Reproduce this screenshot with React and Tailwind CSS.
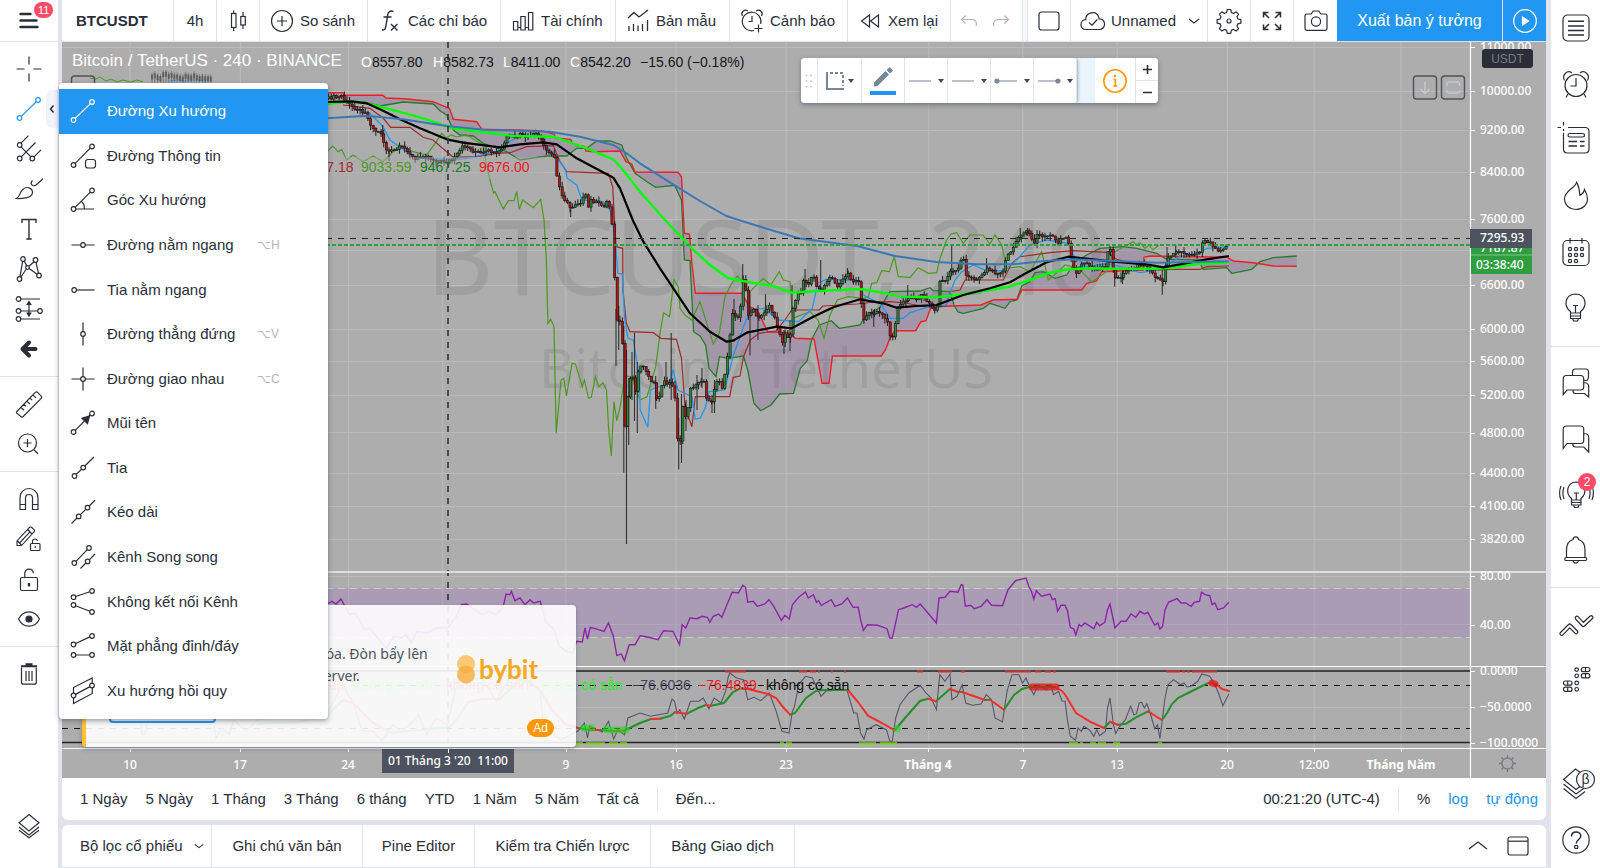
import React, { useState } from 'react';
import clsx from 'clsx';

const Icon = ({ size = 28, children, className }) => (
    <svg
        width={size}
        height={size}
        viewBox="0 0 28 28"
        fill="none"
        stroke="currentColor"
        strokeWidth="1.2"
        className={clsx('shrink-0', className)}
        aria-hidden="true"
    >
        {children}
    </svg>
);

const Dot = ({ x, y, r = 2.3 }) => <circle cx={x} cy={y} r={r} />;

const ICONS = {
    trend: <><Dot x={4.5} y={23} /><Dot x={23} y={5} /><path d="M6.2 21.4 21.3 6.7" /></>,
    info: <><Dot x={4.5} y={23} /><Dot x={23} y={4.5} /><path d="M6.2 21.4 21.3 6.2" /><rect x="16.5" y="17.5" width="10" height="8.5" rx="2.5" /></>,
    angle: <><Dot x={4.5} y={23} /><Dot x={23} y={4.5} /><path d="M6.2 21.4 21.3 6.2M6.8 23H25M12.5 15.5c2 1.6 3 4 2.9 7.3" /></>,
    horizontal: <><Dot x={14} y={14} /><path d="M2.5 14h9.2M16.3 14h9.2" /></>,
    horizontalRay: <><Dot x={5.2} y={14} /><path d="M7.5 14h18" /></>,
    vertical: <><Dot x={14} y={14} /><path d="M14 2.5v9.2M14 16.3v9.2" /></>,
    cross: <><Dot x={14} y={14} /><path d="M2.5 14h9.2M16.3 14h9.2M14 2.5v9.2M14 16.3v9.2" /></>,
    arrow: <><Dot x={4.5} y={23} /><Dot x={23} y={4.5} /><path d="M6.2 21.4 21.3 6.2" /><path d="M20.5 7 18.5 14.5 13 9.2z" fill="currentColor" /></>,
    ray: <><Dot x={5.5} y={22} /><Dot x={14.2} y={13.6} /><path d="M7.2 20.4l5.4-5.2M15.8 12 25 3" /></>,
    extended: <><Dot x={9.7} y={18.4} /><Dot x={18.5} y={9.6} /><path d="M2.5 25.5 8 20M11.4 16.7l5.4-5.4M20.2 8 26 2.3" /></>,
    parallel: <><Dot x={5.3} y={20} /><Dot x={20} y={5} /><Dot x={18.6} y={18.4} /><path d="M7 18.4 18.3 6.6M11.5 25.5l5.4-5.5M20.3 16.8 26 11" /></>,
    disjoint: <><Dot x={4.5} y={9.2} /><Dot x={23} y={3} /><Dot x={4.5} y={17} /><Dot x={23} y={24} /><path d="M6.7 8.5l14.1-4.7M6.6 17.8l14.2 5.4" /></>,
    flat: <><Dot x={4.5} y={12.5} /><Dot x={23} y={4} /><Dot x={4.5} y={23} /><Dot x={23} y={23} /><path d="M6.6 11.5l14.3-6.6M6.8 23h13.9" /></>,
    regression: <><Dot x={4.5} y={18.5} /><Dot x={23} y={8.5} /><path d="M6.5 17.4 21 9.6M4.5 16.2V10.5L23.2 1v5.2M4.5 20.8V26.5l18.8-10v-5.7" /></>,
    crosshair: <path d="M14 1.5v8M14 18.5v8M1.5 14h8M18.5 14h8" />,
    pitchfork: <><Dot x={4.7} y={10} /><Dot x={4.7} y={23.5} /><Dot x={17.3} y={23.5} /><path d="M6.3 21.8 20.5 7.5M6 8.2l7.5-7.5M19 21.8l7-7M6 11.8l10 10" /></>,
    brush: <path d="M1.5 23.5c2.8-1.5 3-4.3 4.4-6.6 2.2-3.6 5.8-5.4 8.9-3.8 3.4 1.8 3.8 5.8.4 8.2-3.5 2.5-8.700 2.400-13.700 2.200zM17.500 5.500c-1.300 1.200-1.600 3.200-.6 4.400 1.200 1.300 3.200 1 4.500-.2l6.600-6" />,
    text: <path d="M7 8V4.5h14V8M14 4.5V24M11.3 24h5.4" strokeWidth="1.4" />,
    pattern: <><Dot x={8} y={4} /><Dot x={20.5} y={5} /><Dot x={12.5} y={12.5} r={1.8} /><Dot x={4.5} y={24} /><Dot x={24} y={20.5} /><path d="M7.6 6.3 5 21.7M9.2 6l2.6 4.9M14 11.3l5-4.6M21 7.3l2.5 11M14.2 13.6l7.8 5.6M11.3 14l-5.4 8" /></>,
    forecast: <><Dot x={3.5} y={4} /><Dot x={3.5} y={16} /><Dot x={25} y={16} /><Dot x={3.5} y={24} /><path d="M5.8 4H25M5.8 16h16.9M5.8 24H25M14 7v13" /><path d="M14 6.500l1.800 3h-3.600zM14 21l1.800-3h-3.600z" fill="currentColor" /></>,
    back: <path d="M20.500 14h-12M14 7.500 7.500 14l6.500 6.500" strokeWidth="4" strokeLinejoin="round" strokeLinecap="round" />,
    ruler: <path d="M1.8 21.5 20.3 2.3c.7-.7 1.6-.7 2.3 0l3.6 3.8c.6.7.6 1.5 0 2.2L8.2 26.5c-.8.7-1.700.7-2.400 0l-4-3.300c-.4-.5-.4-1.200 0-1.700zM6 17.5l3 2.8M9 14.4l2 2M12 11.300l3 2.800M15 8.200l2 2M18 5.100l3 2.800" />,
    zoomIn: <><circle cx="12.5" cy="13" r="9" /><path d="M12.5 9v8M8.5 13h8M19 20l4 3.8" /></>,
    magnet: <path d="M5 24.5V12.500a9 9 0 0 1 18 0v12h-5.500V13a3.500 3.500 0 0 0-7 0v11.500zM5 19.500h5.500M17.500 19.500H23" />,
    pencilLock: <><path d="M2 20v-4L14.500 2.500c.7-.7 1.600-.7 2.300 0l2.200 2.200c.7.7.7 1.600 0 2.300L6.500 20.500H2zM2.500 16l4 4M12.700 4.500l4.300 4.500M5 17.500 15 6.800" strokeWidth="1.100" /><rect x="15.500" y="18.500" width="9.500" height="7" rx="1" /><path d="M17.500 18.500v-2c0-3.200 4.800-3.200 4.800-.5M20.200 21v2" strokeWidth="1.100" /></>,
    lock: <><rect x="5.5" y="12.5" width="17" height="13" rx="1.5" /><path d="M9.8 12.5V8.300c0-5.500 8.300-5.500 8.500 0" /><path d="M14 18v3.400" strokeWidth="2.4" /></>,
    eye: <><path d="M3.500 14C5.800 9.300 9.500 6.800 14 6.800S22.200 9.300 24.500 14c-2.300 4.700-6 7.200-10.500 7.200S5.800 18.700 3.500 14z" /><circle cx="14" cy="14" r="3" fill="currentColor" /></>,
    trash: <><path d="M6.500 7.500v14.700c0 1.200.8 2 2 2h10.800c1.200 0 2-.8 2-2V7.500M11 11v10M14 11v10M17 11v10" /><path d="M6 6.200h16M10.500 4.200h7" strokeWidth="2" /></>,
    layers: <path d="M14 2.500 24 10.800 14 19 4 10.800zM4 15l10 8 10-8M4 18.200l10 7.600 10-7.600" />,
    plusCircle: <><circle cx="14" cy="14" r="10.5" /><path d="M14 9v10M9 14h10" /></>,
    candles: <><rect x="6.5" y="6.5" width="4.500" height="14" /><rect x="15.800" y="9.500" width="4.500" height="8.500" /><path d="M8.700 3.500v3M8.700 20.500V24M18 5v4.500M18 18v4" /></>,
    fx: <><path d="M17.5 4.600c-3-1.500-5.200-.3-5.700 2.800l-2 12.200c-.5 3-1.700 3.800-4 3.200M7.500 10h8" strokeWidth="1.4" /><path d="M15 17l6.500 6.500M21.500 17 15 23.500" strokeWidth="1.4" /></>,
    bars: <path d="M4.500 14.500h4.300v8.500H4.500zM11.800 9.500h4.400V23h-4.400zM19.500 5.500h4.300V23h-4.300zM8.800 20.500h3M16.200 20.500h3.300" />,
    templates: <path d="M4 11l6-5.500 5 4.500 9-7M5 19v5M9.500 17v7M14 18.500v5.500M18.500 17v7M23.500 13v11" strokeWidth="1.3" />,
    alert: <><path d="M16 23.500a9.300 9.300 0 1 1 6.600-6.600M14 9v5.500h-3.500M4.500 9A3.700 3.700 0 0 1 9.800 4M18.200 4A3.700 3.700 0 0 1 23.500 9M20.500 17.500v8M16.500 21.500h8" /></>,
    replay: <path d="M13.500 8v12L5.500 14zM22.500 8v12l-8-6z" />,
    undo: <path d="M10.500 8.500 6.500 12.500l4 4M6.500 12.500H17a4.500 4.500 0 0 1 4 6.500" />,
    redo: <path d="M17.500 8.500l4 4-4 4M21.500 12.500H11a4.500 4.500 0 0 0-4 6.500" />,
    square: <rect x="4" y="5" width="20" height="18" rx="2.5" />,
    cloud: <path d="M7.500 22.500c-7.500 0-7-9.500-.8-9.800C6.600 5.500 17 2.600 19.600 9.800c.3.8.4 1.300.4 2 7-.5 7.700 10.700.2 10.700zM10 15.500l3 2.700 5.300-5.700" />,
    gear: <><path d="M12.300 3.500h3.400l.7 3 2.200.9 2.600-1.600 2.400 2.400-1.600 2.600.9 2.200 3 .7v3.400l-3 .7-.9 2.200 1.600 2.600-2.400 2.400-2.600-1.600-2.200.9-.7 3h-3.400l-.7-3-2.200-.9-2.600 1.600-2.400-2.400 1.600-2.600-.9-2.200-3-.7v-3.400l3-.7.9-2.200-1.600-2.600 2.400-2.400 2.600 1.600 2.200-.9z" strokeLinejoin="round" transform="translate(0 -1)" /><circle cx="14" cy="14" r="2" /></>,
    fullscreen: <path d="M10.500 5.500h-5v5M5.500 5.500l5.500 5.500M17.500 5.500h5v5M22.500 5.500 17 11M10.500 22.500h-5v-5M5.500 22.500 11 17M17.500 22.500h5v-5M22.500 22.500 17 17" strokeWidth="1.500" />,
    camera: <><path d="M4.800 7h4.400l2-3h5.600l2 3h4.400c.9 0 1.800.8 1.800 1.800v12.700c0 1-.9 1.800-1.800 1.800H4.800c-.9 0-1.800-.8-1.800-1.800V8.800C3 7.800 3.900 7 4.800 7z" /><circle cx="14" cy="14.500" r="4.600" /></>,
    play: <><circle cx="14" cy="14" r="11.3" /><path d="M11.500 10v8l6-4z" fill="currentColor" /></>,
    chevronDown: <path d="M9 12l5 4 5-4" />,
    chevronUp: <path d="M5 17l9-7 9 7" />,
    windowIcon: <><rect x="4" y="5" width="20" height="18" rx="2" /><path d="M4 9.2h20" /></>,
};

const RIGHT_ICONS = {
    news: <><rect x="1" y="1" width="26" height="26" rx="4.5" /><path d="M6 7.200h16M6 12h16M6 16.500h16M6 21h16" strokeWidth="1.4" /></>,
    alarm: <><circle cx="14" cy="15.5" r="11" /><path d="M14 8v8H8.500M2.500 10.500C-.5 4.500 5.500-.5 10 3M25.500 10.500c3-6-3-11-7.500-7.500M6 24l-2 3.500M22 24l2 3.500" /></>,
    dataWindow: <><path d="M6 1.500h17c2.500 0 4 1.500 4 4V23c0 2.500-1.500 4-4 4H5.500c-2.500 0-4-1.500-4-4V7M1.500-4v3.500M1.500 3v2M-4.500 1.500H-1" /><rect x="6" y="7.500" width="16.500" height="3.500" rx="1.700" /><path d="M6.500 15.500H15M18 15.500h4.500M6.500 20H15M18 20h4.500" strokeWidth="1.4" /></>,
    fire: <path d="M14.500.5c-.5 5-12.500 8.500-12 16.500.3 6.500 5.500 10.500 11.500 10.500s11.500-4.500 11.500-10.500c0-3.500-1.300-6.500-3-9.500-.8 3.500-2.300 4.800-4.700 5.800C17.500 8.500 17 3.500 14.500.5z" />,
    calendar: <><rect x="1" y="2.5" width="26" height="25" rx="4.5" /><path d="M8 0v5.500M20 0v5.500" /><Dot x={8} y={11} r={1.6} /><Dot x={14} y={11} r={1.6} /><Dot x={20} y={11} r={1.6} /><Dot x={8} y={17} r={1.6} /><Dot x={14} y={17} r={1.6} /><Dot x={20} y={17} r={1.6} /><Dot x={8} y={23} r={1.6} /><Dot x={14} y={23} r={1.6} /></>,
    bulb: <path d="M8.500 19v-1.500C1 12 3 .5 13.500 0 24 .5 26 12 18.500 17.500V19zM8.500 19h10v5.500h-10zM8.500 22h10M10.500 24.500l1 2.500h4l1-2.500M11 11.500h5M13.500 11.500V19" />,
    chats: <path d="M10.500 6.500V3c0-2 1-3 3-3h10c2 0 3 1 3 3v5c0 1.500-.5 2.500-1.500 3.500H22M4.500 6.500h14c2 0 3.200 1.200 3.200 3V18c0 1.800-1.200 3-3.200 3H5l-3.800 4.500V10c0-2.200 1.300-3.500 3.300-3.500zM22 13.500c3 .3 4.700 1.200 4.700 4V28l-4.200-3.500H13c-1.500 0-2-.5-2-3" />,
    chat: <path d="M4.500 1h14c2 0 3.200 1.200 3.200 3v11.500c0 1.800-1.200 3-3.200 3H5l-3.800 5V4.500C1.200 2.300 2.500 1 4.500 1zM22 8.500c3 0 4.700 1 4.700 4V27l-5-5h-8c-2 0-3-1-3-3" />,
    idea: <><path d="M9.500 19v-1.500C3 12 5 1.500 14 1c9.500.5 11.500 11 5 16.500V19zM9.500 19H19v5H9.500zM9.500 21.500H19M11.500 24l1 2.500h3.500l1-2.500M12 12h5M14.300 12v7" /><path d="M-1 5c-2 5-2 9 0 14M2 6c-1.500 4-1.500 8 0 12M27 6c1.500 4 1.500 8 0 12M30 5c2 5 2 9 0 14" /></>,
    bell: <path d="M4.500 20.500V13c0-6 3-9.500 6.500-10.500.5-3.500 5-3.500 5.500 0 3.500 1 6.500 4.500 6.500 10.500v7.500M4 20.500h19.500c1.600 0 1.600 3 0 3H4c-1.600 0-1.600-3 0-3zM11 23.500c.5 3.500 5 3.500 5.500 0" />,
    zigzag: <path d="M-1.500 22.500 6.500 14.500c.8-.8 1.600-.8 2.400 0l6.500 6.500c1.500 1.600-.8 3.800-2.300 2.300l-5.400-5.400-6.800 7c-1.500 1.500-4-.8-2.400-2.400zM30.500 8.500 22.500 16c-.8.8-1.600.8-2.400 0l-6.500-7c-1.400-1.600 1-3.800 2.400-2.300l5.400 5.600 6.500-6c1.700-1.500 4 .7 2.600 2.200z" />,
    dots: <><rect x="1.5" y="15" width="8.5" height="4.200" rx="2" /><path d="M5.700 15v4.200M5.700 21.200v4.200M23.500 1.500v4.200M23.500 7.700v4.200" /><rect x="1.5" y="21.200" width="8.500" height="4.200" rx="2" /><rect x="19.300" y="1.500" width="8.500" height="4.200" rx="2" /><rect x="19.300" y="7.700" width="8.500" height="4.200" rx="2" /><Dot x={14.7} y={3.6} r={1.8} /><Dot x={14.7} y={9.8} r={1.8} /><Dot x={14.7} y={17} r={1.8} /><Dot x={14.7} y={23.300} r={1.8} /></>,
    help: <><circle cx="14" cy="14" r="13.2" /><path d="M9.500 10.500c0-6 9.300-5.800 9.300-.5 0 3.500-4.600 3.500-4.600 7.500" strokeWidth="1.5" /><circle cx="14.200" cy="21" r="1.7" /></>,
};

const BetaLayers = () => (
    <Icon className="overflow-visible">
        <path d="M19 3 13.500-1 1.500 9.500 14 19.500l4-3M1.500 14 14 24l9-6.500M1.500 18.500 14 28.500l9-7" />
        <circle cx="23.5" cy="9.5" r="9" fill="#fff" />
        <text x="23.5" y="14" textAnchor="middle" fontSize="14" fill="currentColor" stroke="none" fontFamily="Liberation Sans, sans-serif">β</text>
    </Icon>
);

const TOOL_GROUPS = [
    [['crosshair', 'Con trỏ'], ['trend', 'Đường Xu hướng'], ['pitchfork', 'Gann và Fibonacci'], ['brush', 'Bút vẽ'], ['text', 'Văn bản'], ['pattern', 'Mẫu hình'], ['forecast', 'Dự báo'], ['back', 'Biểu tượng']],
    [['ruler', 'Thước đo'], ['zoomIn', 'Phóng to']],
    [['magnet', 'Nam châm'], ['pencilLock', 'Giữ chế độ vẽ'], ['lock', 'Khóa bản vẽ'], ['eye', 'Ẩn bản vẽ']],
];

const LINE_TOOLS = [
    { icon: 'trend', label: 'Đường Xu hướng' },
    { icon: 'info', label: 'Đường Thông tin' },
    { icon: 'angle', label: 'Góc Xu hướng' },
    { icon: 'horizontal', label: 'Đường nằm ngang', shortcut: '⌥H' },
    { icon: 'horizontalRay', label: 'Tia nằm ngang' },
    { icon: 'vertical', label: 'Đường thẳng đứng', shortcut: '⌥V' },
    { icon: 'cross', label: 'Đường giao nhau', shortcut: '⌥C' },
    { icon: 'arrow', label: 'Mũi tên' },
    { icon: 'ray', label: 'Tia' },
    { icon: 'extended', label: 'Kéo dài' },
    { icon: 'parallel', label: 'Kênh Song song' },
    { icon: 'disjoint', label: 'Không kết nối Kênh' },
    { icon: 'flat', label: 'Mặt phẳng đỉnh/đáy' },
    { icon: 'regression', label: 'Xu hướng hồi quy' },
];

const RANGES = ['1 Ngày', '5 Ngày', '1 Tháng', '3 Tháng', '6 tháng', 'YTD', '1 Năm', '5 Năm', 'Tất cả'];

const GRID_X = [130, 240.4, 348.5, 442.5, 565.8, 676, 786.2, 928.8, 1022.8, 1117.2, 1227.4, 1314.2, 1401];
const GRID_Y = [47.5, 91.5, 130.5, 172.5, 219.5, 250.5, 285.5, 329.5, 361.5, 395.5, 432.5, 473.5, 506.5, 539.5, 576.5, 624.5, 707.5];

const PRICE_LABELS = [
    [47, '11000.00'], [91, '10000.00'], [130, '9200.00'], [172, '8400.00'], [219, '7600.00'], [285, '6600.00'],
    [329, '6000.00'], [361, '5600.00'], [395, '5200.00'], [433, '4800.00'], [473, '4400.00'], [506, '4100.00'],
    [539, '3820.00'], [576, '80.00'], [625, '40.00'], [671, '0.0000'], [707, '−50.0000'], [743, '−100.0000'],
];

const TIME_LABELS = [
    [130, '10'], [240, '17'], [348, '24'], [566, '9'], [676, '16'], [786, '23'], [928, 'Tháng 4', true],
    [1023, '7'], [1117, '13'], [1227, '20'], [1314, '12:00'], [1401, 'Tháng Năm', true],
];

const EMA_SLOW = '62,128 200,123 327,118.3 363,116 376.7,116.7 403,119.3 446.7,126 486.7,130 520,130.7 550,131.7 580,136.7 613.3,145 626.7,153.3 640,163.3 674.6,185.3 700,201 726.3,216 745,222 771,230 798.6,238.3 857,246 895,256 936.4,262 977.7,264.3 1012,264.3 1045,261 1073.3,259.3 1106.7,260.7 1156.7,262.7 1229,261.3';
const EMA_MID = '327,104 350,101.3 363,102.7 380,106.7 420,117.3 453.3,128.3 486.7,132.7 513.3,136 553.3,136.7 586.7,148.3 613.3,159.3 621.7,168.3 640,191.7 665,220 691.7,248.3 710,265 728.3,278.3 750,282.3 773.3,286 791.7,292.7 813.3,291.3 860,289 883.3,292.7 900,296.7 936.7,297.3 960,294.7 1006.7,287.3 1030,280 1050,272.7 1068.3,269.3 1090,268.3 1113.3,268.7 1153.3,268.7 1173.3,267.7 1196.7,264 1229,262.3';
const EMA_FAST = '327,102 351.7,101.3 366.7,103.3 380,109.3 400,119.3 420,128.3 446.7,139.3 463.3,142.7 500,147.3 520,144.3 543.3,142.3 556.7,144.3 576.7,158.3 613.3,177.7 620,188.3 632.7,220 643.3,241.7 660,268.3 673.3,288.3 690,313.3 710,331.7 726.7,341.7 733,340.7 746.7,332.7 776.7,326.7 791.7,328.3 813.3,316.7 833.3,307.3 860,299.3 883.3,303.3 896.7,307.7 916.7,306 936.7,305 963.3,295 990,288.3 1010,282.3 1026.7,272.7 1046.7,262.3 1068.3,256.7 1083.3,258.3 1113.3,261.7 1146.7,264.3 1163.3,267.3 1180,264.3 1206.7,259.3 1229,256';
const SPAN_B = '327,92.7 343,92.7 344,95.3 382.7,95.3 386,98 407.3,99 433,101.7 446.7,107.3 449.3,108.3 453.3,119.3 476.7,121.7 482,129.3 516.7,130 542.7,131 554,134 556,138.3 570.7,139.3 572,143 578,146 584,146.5 586,151 595,151.7 620,151 626,161.7 631.7,164 635,172 678,172.3 681.5,176.7 684.3,233.3 689.5,234 691.9,263.3 695.3,293.3 741.8,293.3 749.4,306.7 757.3,310 767.6,331.7 790,332.7 795.2,338.3 814.1,339 817.6,358.3 822,383.3 829,383.3 832.4,356 881.3,356 885.4,350 889.9,338.3 895,330.7 915.7,330.7 920.9,321.7 926,320.7 931.2,306.7 981,305 993.2,300 1017.3,299.3 1021.8,290 1081.7,290 1086.7,283.3 1096.7,281 1101.7,271.7 1143.3,270 1144,257.3 1150,256 1198.3,256.7 1227.3,257.3 1233.3,261 1253.3,262.7 1273.3,266 1296.7,266.3';
const SPAN_A = '327,103 350,102 363.3,101.7 380,106 403.3,102 433.3,104 440,110.7 446.7,115 453.3,130 460,135 473.3,136 483.3,143.3 506.7,151.7 520,160 546.7,156 566.7,156 576.7,148.3 586.7,148.3 596.7,141 610,141 621.7,145 626.7,158.3 635,173.3 647,181.7 655.7,187.3 674.6,185.3 681.5,200 684.3,260 690,260.7 692,300 693.6,331.7 700,336 705.6,345 709,368.3 716,376.7 719.4,356.7 728,358.3 743.5,356 747.7,370 753.9,403.3 760.7,410.7 771,405 779.7,394 793.5,393.3 800.3,368.3 807.2,360.7 811.7,339.3 819.3,325 831.3,320.7 839.3,328.3 860,325 865,316.7 880,307.3 890,291.7 920,291 930,287.7 933.3,290.7 950,291.7 954,305 958,312 963.3,313.3 983.3,308.3 990,303.3 1005,308.3 1010,301.7 1016.7,300 1021.7,286 1030,281.7 1035,272.7 1043.3,271.7 1055,278.3 1066.7,275 1075,262 1086.7,255 1100,248.3 1123.3,246.7 1136.7,248.3 1156.7,253.3 1166.7,259.3 1198,260 1203.3,269.3 1226.7,267.7 1231.7,273.3 1251.7,269.3 1260,261.7 1273.3,257.7 1296.7,256';
const KIJUN = '343,105 370,108.3 383.3,118.3 390.7,127.3 410,127.3 423.3,137.3 433,140 446.7,151.7 453.3,157.3 476.7,156.7 496.7,153.3 510,152.7 526.7,146.7 553.3,145.7 560,161.7 566.7,171.7 608.3,173.3 612.7,186.7 616,246.7 622.7,248.3 622.9,290 626.4,323.3 629.9,331.7 653.3,332.7 660.9,338.3 676.4,339.3 681.5,358.3 685,406.7 691.9,426.7 695.3,396.7 729.7,396.7 733.2,377.3 740,376 743.5,356.7 750.4,340 759,333.3 776,331 785,320 791.7,310 819.3,310 822.7,306 857,304 875,302 890,301.7 905,303 933,308 946,306 950,291.7 960,290 965,280 1003.3,280 1011.7,263.3 1020,256.7 1050,252.7 1073.3,250.7 1106.7,252.3 1116.7,259.3 1140,265 1146.7,270.7 1170,269.3 1200,269.3 1206.7,266.7 1229,266';
const TENKAN = '353,106.7 370,113.3 383,126.7 390,140 406.7,151.7 420,158 453,160 466.7,158.3 496.7,151.7 506.7,143.3 520,136 540,136 550,150 565,168.3 567.3,178.3 576.7,185 581.7,200 603.3,201.7 610,210 615,236.7 617.8,273.3 622.3,274 624.7,320 628,338.3 633.3,340 639.5,376.7 640.2,410 647.8,427.3 650.5,390 659,386.7 669.5,383.3 673,370 678,390 691.9,396.7 695.3,419.3 700.5,418 705.6,406.7 709,391.7 724.6,390 733,356.7 743.5,326.7 750.4,310 764,308.3 778,320 798.6,321.7 812.4,308.3 817.6,283 826.7,279.3 860,280.7 863.3,295 880,303.3 890,318.3 903.3,318.3 910,312.7 926.7,307.3 946,305 950,293.3 955,280 961.7,271.7 973.3,265 985,270 1003.3,271 1016.7,260 1030,245 1046.7,240 1068.3,243.3 1073.3,255 1086.7,266.7 1106.7,263.3 1120,266.7 1140,272.7 1156.7,270 1170,263.3 1180,256.7 1200,252.7 1206.7,248.3 1228.7,246.7';
const CHIKOU = '327,151.7 332.7,146 338.3,151.7 341.7,149.3 346.7,160 353,155 363,161.7 373,156 383,161.7 400,145 413,151.7 426.7,155 435,143.3 441.7,133.3 446,138 451,135 456.7,137 466.7,135 483.3,145 486.7,166.7 491.7,186.7 493.5,193 495,191.7 503.3,209 508.3,200.7 514,200.7 516.7,191.7 519.3,209.3 522.7,200 533.3,207.7 540.7,199.3 544,220 546.3,258 547.9,323.3 550.7,319.3 554,326.7 556.2,433.3 561,380 563.8,378.3 566.5,396 572,363.3 575.5,364 582.3,386.7 584.4,380 588.5,398.3 591.3,397.3 595.4,376.7 598.9,386.7 603,382.7 606.5,390 608.5,426.7 611.3,456 614,401.7 616.8,420.7 620.2,406.7 624.7,375 632,378 640,400 647,396.7 655.7,366.7 660,333.3 663.6,312.7 669.5,316.7 674,280 678.3,286.7 680,308.3 685,315 691.7,320 700,301.7 713.3,344 719.3,333.3 725,296.7 731.7,283.3 737.3,276 743.3,283.3 750,291.7 763.3,278.3 770.7,285 779.3,271.7 783.3,280 790,281.7 792.7,318.3 810,311.7 818,320 824,338.3 830,315 837.3,300 848.3,296.7 863.3,298.3 868.3,296.7 871.7,283.3 876.7,282.7 881.7,270.7 889.3,271.7 894.3,256.7 898.3,276.7 910,277.3 918.3,267.7 928.3,273.3 936.7,272.7 940,258.3 946.7,240 951,234 956.7,232.7 963.3,243.3 970,235 983,235 990,244 995,235 1001.7,245 1006.7,268.3 1020,266.7 1030,271.7 1041.7,251.7 1048.3,280 1060,270 1065,265 1078,268 1091.7,281.7 1106.7,271.7 1113,253 1120,249 1133.3,241.7 1136,245 1140,242.7 1145,248.3 1149,245 1153,250 1159,245';

const CLOSES = [
    [327, 99], [333, 97], [338, 98], [342.7, 95], [345, 101.7], [353, 106.7], [360, 110.7], [365.7, 111.7], [368.3, 120], [374, 130], [381.7, 133.3],
    [385, 148.3], [389.3, 151.7], [396, 150], [401, 146.7], [407.3, 150], [411.7, 156], [415, 160], [420, 156.7], [426.7, 155], [433, 160], [443.3, 161.7],
    [453, 160], [458.3, 153.3], [462.7, 146.7], [466.7, 145.7], [471.7, 150.7], [476.7, 151.7], [481.7, 154], [490, 150.7], [496, 155], [500, 151.7],
    [504, 145], [506.7, 136.7], [511.7, 135], [516.7, 139.3], [520, 135], [526.7, 137.3], [533, 134.3], [540, 135.3], [542.7, 145], [548.3, 154], [554, 155],
    [555.7, 171.7], [560.7, 191.7], [566, 201.7], [570.7, 208.3], [575, 204], [581.7, 201.7], [585.3, 193.3], [587.7, 209.3], [590.7, 200], [596.7, 202.7],
    [603.3, 206.7], [608.3, 200], [610.7, 215], [613.3, 231.7], [616, 322.7], [619, 319], [622, 326], [624.7, 432.7], [627.6, 398], [630, 379], [633, 378],
    [635, 394.7], [637, 378.5], [640, 363.3], [644.7, 368.5], [649, 375], [650.5, 385], [653.3, 379.3], [655.7, 398.3], [660, 396.7], [663.6, 377.3],
    [667, 385], [671, 381.7], [674.6, 390], [676.9, 434.3], [679.5, 456], [682.1, 400.7], [685, 419.3], [687.7, 410.7], [690, 386.7], [694.6, 389.3],
    [697, 381.7], [704, 380], [706.5, 400], [712.5, 400.7], [715, 383.3], [718.7, 379.3], [722, 387.7], [724.6, 377.3], [727.3, 359.3], [729.7, 338.3],
    [732, 313.3], [738.4, 316], [740.8, 305], [742.8, 280], [745.3, 283.3], [747.5, 315], [753.3, 310], [758.3, 320], [763.3, 313.3], [769.3, 305],
    [773.3, 315], [780, 333.3], [783.3, 344], [785.3, 333.3], [790, 340.7], [792.3, 311.7], [796.7, 295], [801.7, 290.7], [804.3, 276.7], [807.3, 285],
    [813.3, 276.7], [817.3, 286.7], [822.7, 290.7], [826.7, 281.7], [831.7, 276.7], [836, 286.7], [841.7, 281.7], [847.3, 272.7], [851.7, 281.7],
    [859.3, 281.7], [861, 301.7], [863.3, 319.3], [868.3, 313.3], [876.7, 311.7], [881.7, 315], [887.3, 319.3], [889.3, 335], [893.3, 338.3],
    [896.7, 311.7], [900, 303.3], [906.7, 300], [911.7, 296.7], [916.7, 300], [922.7, 295], [926.7, 300], [933.3, 308.3], [936.7, 313.3], [939.3, 281.7],
    [946.7, 280], [950.7, 271], [957.3, 271], [960.7, 260], [963.3, 257.3], [966, 276.7], [971.7, 278.3], [978.3, 278.3], [983.3, 273.3], [986.7, 268.3],
    [991.7, 271.7], [1003.3, 271.7], [1006.7, 256.7], [1010.7, 251.7], [1014, 248.3], [1017.3, 237.3], [1021.7, 233.3], [1027.3, 232.3], [1030.7, 236],
    [1034, 244], [1037.3, 234], [1043.3, 237.3], [1050, 235], [1055, 237.3], [1057.3, 245], [1060, 239.3], [1067.3, 238.3], [1070, 250], [1071.7, 263.3],
    [1076, 273.3], [1080, 265], [1086.7, 263.3], [1093.3, 268.3], [1100, 268.3], [1105, 266.7], [1108.3, 251.7], [1110.7, 250], [1112.7, 263.3],
    [1114.7, 279.3], [1118.3, 278.3], [1123.3, 274], [1128.3, 268.3], [1133.3, 270], [1140, 263.3], [1146.7, 266.7], [1153.3, 273.3], [1158.3, 280],
    [1162.7, 282.7], [1165, 266.7], [1168.3, 256.7], [1173.3, 252.7], [1180, 251.7], [1190, 254.3], [1200, 251.7], [1201.7, 241.7], [1206.7, 240.7],
    [1211.7, 243.3], [1216.7, 250], [1223.3, 248.3], [1229, 245.7],
];

// x, top, bottom of the wicks that are too long for the generated range
const LONG_WICKS = [
    [382.7, 125, 140], [389, 150, 161], [570.7, 207, 217], [616, 309, 366], [618.7, 306, 350], [623.8, 326, 472.7], [626.5, 350, 544], [628.7, 378, 445],
    [632, 352, 400], [634.5, 332.7, 421], [637.3, 362, 433], [655.7, 376, 408.7], [671.2, 333, 400], [666, 362, 385], [678.7, 418, 469.3], [681.5, 394, 463],
    [686, 400, 431], [697, 375, 410], [702, 368, 388], [712, 395, 413], [714.5, 380, 413], [742.7, 264, 305], [750, 292, 355.6], [758, 305, 340],
    [734, 299, 318], [765.5, 294, 312], [784, 330, 354], [790, 320, 351], [792, 285, 312], [805, 269, 290], [820.7, 260, 290], [847.5, 268, 276],
    [873.7, 310, 327], [907.7, 285, 303], [951.7, 245.3, 275], [986.5, 258, 272], [1020.3, 228, 240], [1027.5, 228, 236], [1110, 246, 255],
    [1114.7, 270, 286.7], [1122.5, 268, 284], [1162.3, 266, 294.7], [1167, 247, 270], [1175.7, 245, 258], [1205, 238, 246],
];

const RSI = '327,604 332,601.3 336,604 341,599 344.4,605.3 349.6,614.7 355,613 365,629.7 370,628 379,639.7 386,648 394,636.3 401,638 406,634.7 411.5,643 416.7,631.3 427,633 435.6,628 447.7,628 456.3,616.3 461.5,604.7 466.6,604 475,609.7 482,614.7 489,611.3 496,614.7 503,608 506,594 509.7,594.7 511.4,591.3 514.9,600.7 520,598 525,604.7 530,599.7 533.4,603 540.3,601.3 545.5,621.3 554,629.7 559.3,646.3 566,651.3 573,653 576.5,641.3 582.3,642 585,628 587.5,639 590.3,627.3 595.4,628.7 604,631.3 608.5,623 613.3,636.3 616.8,655.3 621.3,654 624.4,660.7 629.2,644.7 635,644.7 640.2,635.7 648.8,637.3 658,639.7 663.6,630.7 673,631.3 679.5,644.7 682.2,624.7 685.7,628 690,618 697,618.7 702,616.3 707.4,617.3 709.8,622.3 713.2,616.3 718.7,614 721.8,617.3 726.3,606.3 732.2,592.3 738.4,593 742.8,585.3 745.6,587.3 747.7,602.3 753.2,601.3 757.3,606.3 764.9,604 769,599.7 773.8,606.3 781.4,620.3 784.9,615.3 789.3,619 792.4,604.7 798.6,597.3 805.5,592 808.3,598 813.4,594.7 816.5,602.3 818.6,600.7 821.3,605.3 831.3,599.7 834.8,606.3 841.7,604 847.5,598 853,607.3 858.2,607.3 860.6,619.7 863.4,630.3 867.5,624.7 877.8,625.3 887,628.7 889.9,638 892.3,638 898.5,609.7 903.7,608 912.3,604.7 916.4,607.3 920.2,604 936.4,623 939,598 945,597.3 950,591.3 958,592.3 961.2,584.7 962.9,585.3 965.3,606.3 970.8,605.3 974.3,608.7 981,606.3 987,599.7 991.5,605.3 1002.5,605.7 1008,589.7 1015.6,580.7 1026,578 1028.7,586.3 1031.4,591.3 1033.8,599 1036.3,590.7 1041.4,596.3 1050,594 1052.4,599.7 1055.2,598.7 1057.6,611.3 1061,605.3 1065,605.3 1067.6,611.3 1070.3,627.3 1073.8,629 1075.8,634.7 1079,624.7 1081.4,626.3 1084.8,623 1093.8,628.7 1096.8,622.3 1099.6,625.7 1104.8,622.3 1107.5,609.7 1110,604 1115,628 1121,621.3 1126,621.3 1131,614 1135.8,617.3 1140,611.3 1144.4,614 1147.8,612.3 1154.7,625.3 1157.8,623 1159.9,629 1162.6,626.3 1165,609.7 1168.5,602.3 1177,598.7 1181.2,603 1185.7,603 1191.2,606.3 1194.3,602.3 1199.5,601.3 1201.5,592.3 1205.3,594.7 1209.8,595.7 1212.2,604.7 1215,603 1217.7,609.7 1223.6,608 1228.8,602.3';
const WILLIAMS = '139.5,714.7 142,734 145,733 148,719.7 175,700 213.5,719.7 216,738 222,728 229,734.7 234,719.7 246,731 258,719.7 280,718 327,714.7 342.7,683 348,694.7 353,701 361.6,731 372,731 382,741 392.6,724.7 401,731 410,724.7 418.4,714.7 427,734.7 435.6,718 447.7,724.7 451,708 458,681 482,678 496,701 509.7,678 527,681 540,691 543.8,728 561,739.7 578,731 584.4,723 587.5,738 589.6,726.3 602.3,732 608.5,721.3 613.7,739 617.8,729.7 624.4,734.7 628,718 640,713 650.5,716.3 667.8,713 672,699 674.6,701.3 677,713 679.8,709.7 684.3,719 690.5,701.3 698.8,701.3 703.2,698 709,708.7 714.2,698 721,703 725.6,691.3 728,678 729.7,673 736.6,678 743.5,679.7 747.7,699.7 753.9,697.3 760.7,700.7 769.3,693 776.2,711.3 782,731.3 789,733 792.4,711.3 794.5,706.3 798.6,684.7 805.5,676.3 812.4,678 821,696.3 826,691 846.8,689.7 850.3,701.3 853.7,713 857,713 860.6,733 864,739 866.8,729.7 876,724.7 886.4,729.7 889.9,741.3 892.3,741.3 895.7,718 900,704.7 908.8,693 920.2,685.3 926,693 931.2,698 936.4,709.7 939.8,674.7 945,681.3 950,674 951.9,699.7 957,696.3 962.2,684.7 965.7,703 972.5,705.3 981,704 986.3,694.7 991.5,699.7 995,718 1002.5,722 1007,691.3 1012,674.7 1019,674.7 1022.5,683 1026,678 1029.4,686.3 1033.8,694.7 1038,684.7 1046.6,689.7 1050.7,684.7 1053.5,694.7 1058.6,691.3 1062,701 1065,701.3 1067.6,721.3 1070.3,736.3 1075.5,740.3 1078,728 1081.4,731.3 1084,726.3 1089.3,729.7 1093.8,736.3 1096.8,729.7 1099.6,735.7 1105.5,731.3 1107.5,708 1110,698 1113.4,724.7 1115.8,733.7 1118.5,728 1125.4,719.7 1130.6,706.3 1134,714.7 1136.5,713.7 1139.2,703 1141.6,702.3 1144.4,708 1146.8,703.7 1150.2,713 1154.7,728.7 1157.5,724.7 1159.9,738.7 1162.6,718 1165,698 1167.8,684.7 1173.6,679.7 1180.5,684.7 1184,683 1187,687 1190.9,686.3 1197.8,681.3 1201.9,674 1209.8,676.3 1215,684.7 1218.4,693 1222.9,705.7 1228.8,694';

const MA_UP = [
    '258,724 300,722 327,716 342.7,700', '390,733 420,730 450,727 458,718 468,702', '500,699 520,680 530,681', '578,728 590,730', '600,730 612,731', '624.4,730.5 640,723 651,719', '660,718.7 670,716 675,712.3', '687,713.7 698,708 706,705',
    '711,705.7 724,703 733,692 740,688.7 745,688', '790,714.7 795,713 806,698 816,691 822,690 848,690', '895,730 905,718 920,701 928,698.7', '936,701.3 950,689', '958,692 962,692',
    '985,700 990,699.7', '1004,709.7 1014,695 1022,689 1029,687 1055,687', '1104,728 1110,721.7', '1118,724.7 1126,723.7 1136,717.3 1148,711.3', '1162,720 1167,713 1172,704 1178,698 1190,692 1209,682.7',
];
const MA_DOWN = [
    '342.7,700 353,703 372,722 390,733', '468,702 482,699 500,699', '530,681 540,690 552,710 565,724 578,728', '590,730 600,730', '612,731 624.4,730.5', '651,719 660,718.7', '675,712.3 687,713.7', '706,705 711,705.7',
    '745,688 755,690.7 768,694 776,698 783,707 790,714.7', '848,690 858,702 868,715.7 878,721 895,730.5', '928,698.7 936,701.3', '950,689 958,692', '962,692 985,700', '990,699.7 1004,709.7',
    '1055,687 1062,691 1066,696 1076,713 1090,721.7 1104,728', '1110,721.7 1118,724.7', '1148,711.3 1162,720', '1209,682.7 1216,684 1222,689 1229,691',
];
const OVERBOUGHT = [[725, 746], [799, 807], [810, 816], [818, 820], [831, 833], [844, 846], [917, 923], [938, 952], [961, 965], [1005, 1031], [1035, 1041], [1045, 1051], [1053, 1056], [1166, 1180], [1182, 1185], [1187, 1190], [1192, 1217]];
const OVERSOLD = [[576, 583], [586, 605], [609, 618], [620, 627], [780, 784], [786, 792], [859, 876], [880, 897], [1069, 1078], [1080, 1083], [1090, 1096], [1098, 1106], [1113, 1120], [1158, 1162]];

const noise = (n) => {
    const v = Math.sin(n * 12.9898) * 43758.5453;
    return v - Math.floor(v);
};

const priceAt = (x) => {
    const i = CLOSES.findIndex((p) => p[0] >= x);
    if (i <= 0) return CLOSES[0][1];
    const [x0, y0] = CLOSES[i - 1];
    const [x1, y1] = CLOSES[i];
    return y0 + ((y1 - y0) * (x - x0)) / (x1 - x0);
};

const buildCandles = () => {
    const candles = [];
    let open = priceAt(328);
    for (let i = 0; i < 343; i++) {
        const x = 328.6 + i * 2.624;
        const close = priceAt(x) + (noise(i) - 0.5) * 3.5;
        candles.push({
            x,
            open,
            close,
            high: Math.min(open, close) - noise(i + 500) * 5,
            low: Math.max(open, close) + noise(i + 900) * 5,
        });
        open = close;
    }
    return candles;
};

const CANDLES = buildCandles();

// The start of the series, only its top shows above the tool menu
const EARLY_CANDLES = Array.from({ length: 22 }, (_, i) => ({
    x: 152 + i * 2.8,
    top: 77 - noise(i + 40) * 4 - (i > 3 && i < 10 ? 2 : 0),
}));

const Chart = () => {
    const cloud = `${SPAN_B} ${SPAN_A.split(' ').reverse().join(' ')}`;

    return (
        <svg
            className="block h-full w-full"
            viewBox="62 42 1484 736"
            preserveAspectRatio="xMaxYMin slice"
            fill="none"
            fontFamily="'Liberation Sans', Arial, sans-serif"
            fontSize="14"
            role="img"
            aria-label="BTCUSDT"
        >
            <rect x="62" y="42" width="1484" height="736" fill="#adadad" />

            {/* Grid */}
            <g stroke="#bababa" strokeWidth="1.2">
                {GRID_X.map((x) => <path key={x} d={`M${x} 42V748`} />)}
                {GRID_Y.map((y) => <path key={y} d={`M62 ${y}H1470`} />)}
            </g>

            {/* Watermark */}
            <g fill="#000" fillOpacity="0.08" textAnchor="middle" fontFamily="'Noto Sans', sans-serif">
                <text x="766" y="295" fontSize="104">BTCUSDT, 240</text>
                <text x="766" y="388" fontSize="54">Bitcoin / TetherUS</text>
            </g>

            {/* Ichimoku */}
            <polygon points={cloud} fill="#84589c" fillOpacity="0.28" />
            <polyline points={SPAN_A} stroke="#237d26" strokeWidth="1.3" />
            <polyline points={SPAN_B} stroke="#ec1f27" strokeWidth="1.4" />
            <polyline points={CHIKOU} stroke="#4b9a1f" strokeWidth="1.2" />
            <polyline points={KIJUN} stroke="#a12a2a" strokeWidth="1.2" />
            <polyline points={TENKAN} stroke="#2196f3" strokeWidth="1.3" />

            {/* Candles */}
            <g stroke="#333" strokeWidth="1.1">
                {LONG_WICKS.map(([x, top, bottom]) => <path key={x} d={`M${x} ${top}V${bottom}`} />)}
            </g>
            {CANDLES.map(({ x, open, close, high, low }) => (
                <g key={x} stroke="#111">
                    <path d={`M${x} ${high}V${low}`} strokeWidth="0.9" />
                    <rect
                        x={x - 1.1}
                        y={Math.min(open, close)}
                        width="2.2"
                        height={Math.max(1, Math.abs(open - close))}
                        fill={close < open ? '#2e8b3a' : '#b51616'}
                        strokeWidth="0.6"
                    />
                </g>
            ))}
            <path d="M90 78l6 1 4-2 6 4 5-2 6 3 6-2 8 2 6-2 6 2" stroke="#4b9a1f" />
            <path d="M170 81l8-1 6 1 10-1 10 1" stroke="#2196f3" strokeOpacity="0.7" />
            <g stroke="#555" strokeOpacity="0.8">
                {EARLY_CANDLES.map(({ x, top }) => (
                    <g key={x}>
                        <path d={`M${x} ${top - 2}V84`} strokeWidth="0.8" />
                        <path d={`M${x} ${top}v5`} strokeWidth="2" />
                    </g>
                ))}
            </g>
            <rect x="328" y="157" width="216" height="22" fill="#adadad" fillOpacity="0.45" />

            {/* Moving averages */}
            <g strokeLinejoin="round">
                <polyline points={EMA_MID} stroke="#00ff00" strokeWidth="2.4" />
                <polyline points={EMA_FAST} stroke="#000" strokeWidth="2.2" />
                <polyline points={EMA_SLOW} stroke="#3a78b5" strokeWidth="2" />
            </g>

            {/* RSI */}
            <rect x="62" y="589" width="1408" height="48" fill="#a86cd0" fillOpacity="0.25" />
            <path d="M62 588.5H1470M62 637.5H1470" stroke="#c9c9c9" strokeDasharray="7 5" />
            <polyline points={RSI} stroke="#8e24aa" strokeWidth="1.4" />

            {/* Williams %R */}
            <path d="M62 671H1470M62 742.5H1470" stroke="#222" strokeWidth="1.4" />
            <path d="M62 685.5H1470M62 728.5H1470" stroke="#111" strokeWidth="1.2" strokeDasharray="6 6" />
            <g stroke="#e53935" strokeOpacity="0.6" strokeWidth="3">
                {OVERBOUGHT.map(([a, b]) => <path key={a} d={`M${a} 671.5H${b}`} />)}
            </g>
            <g stroke="#7cdb1c" strokeOpacity="0.7" strokeWidth="3">
                {OVERSOLD.map(([a, b]) => <path key={a} d={`M${a} 743.5H${b}`} />)}
            </g>
            <polyline points={WILLIAMS} stroke="#55556f" strokeWidth="1.1" />
            <g strokeWidth="2" strokeLinecap="round">
                {MA_UP.map((p) => <polyline key={p} points={p} stroke="#23902a" />)}
                {MA_DOWN.map((p) => <polyline key={p} points={p} stroke="#f0302c" />)}
            </g>
            <g strokeWidth="7" strokeLinecap="round">
                <path d="M584 728h8M606 729l4 1M614 730h3M621 730h5M897 729h.1" stroke="#1ee01e" strokeOpacity="0.6" />
                <path d="M1032 687h24M1212 683l3 1" stroke="#e01818" strokeOpacity="0.75" />
            </g>

            {/* Current price and crosshair */}
            <path d="M62 245H1470" stroke="#2f9e3f" strokeWidth="1.8" strokeDasharray="4 2" />
            <path d="M62 238.5H1470" stroke="#222" strokeWidth="1.2" strokeDasharray="6 6" />
            <path d="M448 42V748" stroke="#333" strokeWidth="1.6" strokeDasharray="6 6" />

            {/* Legends */}
            <text x="72" y="66" fontSize="17" fill="#fff">Bitcoin / TetherUS · 240 · BINANCE</text>
            <g fill="#131722">
                <text x="361" y="67"><tspan fill="#fff">O</tspan>8557.80</text>
                <text x="433" y="67"><tspan fill="#fff">H</tspan>8582.73</text>
                <text x="503" y="67"><tspan fill="#fff">L</tspan>8411.00</text>
                <text x="570" y="67"><tspan fill="#fff">C</tspan>8542.20</text>
                <text x="640" y="67">−15.60 (−0.18%)</text>
            </g>
            <rect x="71.5" y="76" width="23" height="23" rx="3" stroke="#50535e" strokeWidth="1.5" />
            <text x="303" y="172" fill="#a12a2a">9377.18</text>
            <text x="361" y="172" fill="#4b9a1f">9033.59</text>
            <text x="420" y="172" fill="#0f7a18">9467.25</text>
            <text x="479" y="172" fill="#f3151d">9676.00</text>
            <text x="261" y="690" fill="#f3151d">không có sẵn</text>
            <text x="354" y="690" fill="#1ee01e">không có sẵn</text>
            <text x="446" y="690" fill="#f3151d">không có sẵn</text>
            <text x="539" y="690" fill="#1ff01f">không có sẵn</text>
            <text x="632" y="690" fill="#3d3d5c">−76.6036</text>
            <text x="698" y="690" fill="#f3151d">−76.4839</text>
            <text x="766" y="690" fill="#111">không có sẵn</text>

            {/* Pane buttons */}
            <g stroke="#50535e" strokeWidth="1.4">
                <rect x="1413.5" y="76" width="23" height="23" rx="3" />
                <rect x="1441.5" y="76" width="23" height="23" rx="3" />
                <path d="M1425 82v11M1420.5 89l4.5 4.5 4.5-4.5M1447 86v-2c0-1.500 1-2 2-2h8c1.500 0 2.500.5 2.500 2v2M1447 90v1c0 1.500 1 2 2 2h8c1.500 0 2.500-.5 2.500-2v-1" stroke="#c6c9d2" />
            </g>

            {/* Pane separators and axes */}
            <path d="M62 572H1546" stroke="#dcdcdc" strokeWidth="2" />
            <path d="M62 666.5H1546M62 748.5H1546M1470.5 42V778" stroke="#fff" strokeWidth="1.2" />
            <g stroke="#fff">
                {PRICE_LABELS.map(([y]) => <path key={y} d={`M1470 ${y + 0.5}h5`} />)}
                {TIME_LABELS.map(([x]) => <path key={x} d={`M${x + 0.5} 748v4`} />)}
            </g>
            <g fill="#fff" fontFamily="'Noto Sans', sans-serif" fontSize="12" fontWeight="500">
                {PRICE_LABELS.map(([y, label]) => <text key={label} x="1480" y={y + 4}>{label}</text>)}
                {TIME_LABELS.map(([x, label, bold]) => (
                    <text key={label} x={x} y="769" textAnchor="middle" fontWeight={bold ? 700 : 500}>{label}</text>
                ))}
                <rect x="1471" y="247" width="61" height="27" fill="#2f9e3f" />
                <text x="1480" y="252">7187.87</text>
                <path d="M1471 255H1532" stroke="#7fc589" />
                <rect x="1470" y="229" width="62" height="19" fill="#4c525e" />
                <text x="1480" y="242">7295.93</text>
                <text x="1476" y="269">03:38:40</text>
                <rect x="382" y="749" width="132" height="24" fill="#4c525e" />
                <text x="388" y="765">01 Tháng 3 '20</text>
                <text x="508" y="765" textAnchor="end">11:00</text>
            </g>
            <path d="M448.5 749v4" stroke="#fff" />
            <rect x="1482" y="49" width="51" height="19" rx="3" fill="#2a2e39" />
            <text x="1507.5" y="63" fontSize="12" fill="#787b86" textAnchor="middle">USDT</text>
            <g stroke="#787b86" strokeWidth="1.3">
                <circle cx="1507.5" cy="763.5" r="5.5" />
                <path d="M1507.5 755v3M1507.5 769v3M1499 763.5h3M1513 763.5h3M1501.5 757.5l2 2M1511.5 767.5l2 2M1501.5 769.5l2-2M1511.5 759.5l2-2" />
            </g>
        </svg>
    );
};

const HeaderButton = ({ icon, label, className, ariaLabel }) => (
    <button
        aria-label={ariaLabel}
        className={clsx('flex h-full items-center gap-1 border-r border-[#e0e3eb] pl-2 whitespace-nowrap', className)}
    >
        <Icon>{ICONS[icon]}</Icon>
        {label}
    </button>
);

const Header = () => (
    <header className="flex h-[42px] shrink-0 border-b border-[#e0e3eb] bg-white">
        <button className="w-28 border-r border-[#e0e3eb] pl-3.5 text-left font-bold">BTCUSDT</button>
        <button className="w-[43px] border-r border-[#e0e3eb]">4h</button>
        <HeaderButton icon="candles" ariaLabel="Kiểu biểu đồ" className="w-[43px]" />
        <HeaderButton icon="plusCircle" label="So sánh" className="min-w-[108px]" />
        <HeaderButton icon="fx" label="Các chỉ báo" className="min-w-[133px]" />
        <HeaderButton icon="bars" label="Tài chính" className="min-w-[115px]" />
        <HeaderButton icon="templates" label="Bản mẫu" className="min-w-[114px]" />
        <HeaderButton icon="alert" label="Cảnh báo" className="min-w-[118px]" />
        <HeaderButton icon="replay" label="Xem lại" className="min-w-[103px]" />
        <div className="flex flex-1 items-center gap-1 pl-1 text-[#b2b5be]">
            <button aria-label="Hoàn tác"><Icon>{ICONS.undo}</Icon></button>
            <button aria-label="Làm lại"><Icon>{ICONS.redo}</Icon></button>
        </div>
        <div className="w-1.5 border-x border-[#e0e3eb] bg-[#f7f8fc]" />
        <button className="flex w-[43px] items-center justify-center border-r border-[#e0e3eb]" aria-label="Bố cục"><Icon>{ICONS.square}</Icon></button>
        <button className="flex w-[137px] items-center gap-1 border-r border-[#e0e3eb] pl-2">
            <Icon>{ICONS.cloud}</Icon>
            Unnamed
            <Icon>{ICONS.chevronDown}</Icon>
        </button>
        <button className="flex w-[43px] items-center justify-center border-r border-[#e0e3eb]" aria-label="Cài đặt"><Icon>{ICONS.gear}</Icon></button>
        <button className="flex w-[43px] items-center justify-center border-r border-[#e0e3eb]" aria-label="Toàn màn hình"><Icon>{ICONS.fullscreen}</Icon></button>
        <button className="flex w-[43px] items-center justify-center" aria-label="Chụp ảnh"><Icon>{ICONS.camera}</Icon></button>
        <button className="w-[166px] border-r border-[#e0e3eb] bg-[#2196f3] text-base text-white">Xuất bản ý tưởng</button>
        <button className="flex w-[43px] items-center justify-center bg-[#2196f3] text-white" aria-label="Phát trực tiếp"><Icon>{ICONS.play}</Icon></button>
    </header>
);

const LeftToolbar = ({ menuOpen, onToggle }) => (
    <nav className="flex w-[58px] shrink-0 flex-col bg-white">
        <button className="relative flex h-[42px] items-center justify-center border-b border-[#e0e3eb]" aria-label="Menu">
            <svg width="20" height="17" viewBox="0 0 20 17" stroke="currentColor" strokeWidth="2.4" strokeLinecap="round">
                <path d="M1.5 2h10M1.5 8.500h16M1.5 15h17" />
            </svg>
            <span className="absolute left-[34px] top-0.5 rounded-full bg-[#ff4a68] px-1 text-[11px] leading-4 text-white">11</span>
        </button>
        {TOOL_GROUPS.map((group, index) => (
            <div key={index} className="flex flex-col border-b border-[#e0e3eb] py-[7px]">
                {group.map(([icon, label]) => (
                    <button
                        key={icon}
                        onClick={icon === 'trend' ? onToggle : undefined}
                        aria-label={label}
                        aria-expanded={icon === 'trend' ? menuOpen : undefined}
                        className={clsx('relative flex h-10 items-center justify-center', icon === 'trend' && 'text-[#2196f3]')}
                    >
                        <Icon>{ICONS[icon]}</Icon>
                        {icon === 'trend' && (
                            <span className="absolute right-0 flex h-[38px] w-3 items-center justify-center rounded-l-md bg-[#f0f3fa] text-[#131722]">
                                <svg width="6" height="8" viewBox="0 0 6 8" fill="none" stroke="currentColor" strokeWidth="1.3"><path d="M4.500.5 1.500 4l3 3.500" /></svg>
                            </span>
                        )}
                    </button>
                ))}
            </div>
        ))}
        <button className="mt-[7px] flex h-10 items-center justify-center" aria-label="Xóa"><Icon>{ICONS.trash}</Icon></button>
        <button className="mt-auto mb-[22px] flex h-10 items-center justify-center" aria-label="Cây đối tượng"><Icon>{ICONS.layers}</Icon></button>
    </nav>
);

const LineToolMenu = () => (
    <div role="menu" className="absolute left-[59px] top-[83px] z-30 flex h-[636px] w-[269px] flex-col rounded bg-white py-1.5 shadow-[0_2px_5px_rgba(40,50,80,0.45)]">
        {LINE_TOOLS.map(({ icon, label, shortcut }, index) => (
            <button
                key={label}
                role="menuitem"
                className={clsx('flex flex-1 items-center gap-2.5 pl-2.5 text-left', index === 0 && 'bg-[#2196f3] text-white')}
            >
                <Icon>{ICONS[icon]}</Icon>
                <span className="w-[140px] whitespace-nowrap">{label}</span>
                {shortcut && <span className="text-xs text-[#b2b5be]">{shortcut}</span>}
            </button>
        ))}
    </div>
);

const Caret = () => <svg width="6" height="4" viewBox="0 0 6 4" fill="#40454f"><path d="M0 0h6L3 4z" /></svg>;

const LineButton = ({ label, start, end }) => (
    <button className="flex w-[43px] items-center justify-center gap-1.5 border-r border-[#e0e3eb]" aria-label={label}>
        <svg width="24" height="6" viewBox="0 0 24 6" stroke="#758696" strokeWidth="1.2">
            <path d="M1 3h22" />
            {start && <circle cx="3" cy="3" r="2" fill="#758696" />}
            {end && <circle cx="21" cy="3" r="2" fill="#758696" />}
        </svg>
        <Caret />
    </button>
);

const DrawingToolbar = () => (
    <div className="absolute right-[388px] top-4 z-10 flex h-[45px] overflow-hidden rounded bg-[#e9f4fd] shadow-[0_2px_5px_rgba(40,50,80,0.45)]">
        <div className="flex rounded-r bg-white shadow-[1px_0_3px_rgba(40,50,80,0.4)]">
            <div className="flex w-[17px] items-center justify-center border-r border-[#e0e3eb]">
                <svg width="8" height="14" viewBox="0 0 8 14" fill="#c8cbd3">
                    <circle cx="1.5" cy="1.5" r="1" /><circle cx="6" cy="1.5" r="1" />
                    <circle cx="1.5" cy="7" r="1" /><circle cx="6" cy="7" r="1" />
                    <circle cx="1.5" cy="12.5" r="1" /><circle cx="6" cy="12.5" r="1" />
                </svg>
            </div>
            <button className="flex w-11 items-center justify-center gap-1 border-r border-[#e0e3eb]" aria-label="Mẫu">
                <svg width="18" height="18" viewBox="0 0 18 18" fill="none" stroke="#758696">
                    <path d="M1 0v17h17" strokeWidth="2" />
                    <path d="M4 1h13v13" strokeWidth="2" strokeDasharray="3 2" />
                </svg>
                <Caret />
            </button>
            <button className="flex w-[43px] flex-col items-center justify-center gap-1 border-r border-[#e0e3eb]" aria-label="Màu đường kẻ">
                <svg width="20" height="20" viewBox="0 0 20 20" fill="#758696">
                    <path d="M1 15.500 12.500 4l3.500 3.500L4.500 19 1 19.500zM13.500 3 16 .7c.5-.5 1-.5 1.500 0l2 2c.5.5.5 1 0 1.500L17 6.500z" />
                </svg>
                <span className="h-1 w-[26px] bg-[#2196f3]" />
            </button>
            <LineButton label="Độ dày" />
            <LineButton label="Kiểu" />
            <LineButton label="Đầu trái" start />
            <LineButton label="Đầu phải" end />
        </div>
        <div className="w-[18px]" />
        <button className="flex w-[41px] items-center justify-center border-r border-[#e0e3eb] bg-white text-[#ff9800]" aria-label="Thông tin">
            <svg width="26" height="26" viewBox="0 0 26 26" fill="none" stroke="currentColor" strokeWidth="1.6">
                <circle cx="13" cy="13" r="11.2" />
                <path d="M11.500 11.500h1.800V18M11.300 18h3.800" /><path d="M13 7v2" strokeWidth="2.2" />
            </svg>
        </button>
        <div className="flex w-[22px] flex-col bg-white text-[#2a2e39]">
            <button className="flex flex-1 items-center justify-center border-b border-[#e0e3eb]" aria-label="Tăng">
                <svg width="9" height="9" viewBox="0 0 9 9" stroke="currentColor" strokeWidth="1.6"><path d="M4.500 0v9M0 4.500h9" /></svg>
            </button>
            <button className="flex flex-1 items-center justify-center" aria-label="Giảm">
                <svg width="9" height="9" viewBox="0 0 9 9" stroke="currentColor" strokeWidth="1.6"><path d="M0 4.500h9" /></svg>
            </button>
        </div>
    </div>
);

const AdBanner = () => (
    <div className="absolute bottom-[31px] left-5 h-[142px] w-[494px] overflow-hidden rounded border-l-4 border-[#ffc02e] bg-white/90 shadow-[0_2px_4px_rgba(40,50,80,0.35)]">
        <button className="absolute bottom-6 left-[23px] h-9 w-[107px] rounded border-2 border-[#2196f3]" aria-label="Giao dịch" />
        <p className="absolute left-[231px] top-[38px] font-['Noto_Sans',sans-serif] text-sm leading-[22px] text-[#4c525e]">
            hóa. Đòn bẩy lên<br />server.
        </p>
        <div className="absolute left-[371px] top-[46px] flex items-center gap-1">
            <svg width="18" height="30" viewBox="0 0 18 30">
                <circle cx="9" cy="10" r="9" fill="#fbc878" />
                <circle cx="9" cy="20.5" r="9" fill="#f9ab38" fillOpacity="0.8" />
            </svg>
            <span className="font-['Lato',sans-serif] text-[26px] font-bold leading-9 text-[#f9a825]">bybit</span>
        </div>
        <span className="absolute bottom-2.5 right-[22px] rounded-full bg-[#ff9800] px-1.5 text-xs leading-[18px] text-white">Ad</span>
    </div>
);

const RangeBar = () => (
    <div className="flex h-[42px] shrink-0 items-center rounded-b-md bg-white pr-2 pl-[18px]">
        <div className="flex gap-[18px]">
            {RANGES.map((range) => <button key={range}>{range}</button>)}
        </div>
        <div className="mx-[18px] h-6 w-px bg-[#e0e3eb]" />
        <button>Đến...</button>
        <button className="ml-auto">00:21:20 (UTC-4)</button>
        <div className="mx-[18px] h-6 w-px bg-[#e0e3eb]" />
        <div className="flex gap-[18px]">
            <button>%</button>
            <button className="text-[#2196f3]">log</button>
            <button className="text-[#2196f3]">tự động</button>
        </div>
    </div>
);

const BottomTabs = () => (
    <div className="mt-[5px] flex h-[43px] shrink-0 rounded-t-md border-b border-[#e0e3eb] bg-white">
        <button className="flex w-[150px] items-center border-r border-[#e0e3eb] pl-[18px]">
            Bộ lọc cổ phiếu
            <Icon size={24} className="ml-1">{ICONS.chevronDown}</Icon>
        </button>
        <button className="w-[151px] border-r border-[#e0e3eb]">Ghi chú văn bản</button>
        <button className="w-[112px] border-r border-[#e0e3eb]">Pine Editor</button>
        <button className="w-44 border-r border-[#e0e3eb]">Kiểm tra Chiến lược</button>
        <button className="w-36 border-r border-[#e0e3eb]">Bảng Giao dịch</button>
        <div className="ml-auto flex items-center gap-3 pr-3.5">
            <button aria-label="Mở rộng"><Icon>{ICONS.chevronUp}</Icon></button>
            <button aria-label="Phóng to bảng"><Icon>{ICONS.windowIcon}</Icon></button>
        </div>
    </div>
);

const SideButton = ({ icon, label, children }) => (
    <button className="relative flex h-14 items-center justify-center" aria-label={label}>
        {icon ? <Icon className="overflow-visible">{RIGHT_ICONS[icon]}</Icon> : children}
        {icon === 'idea' && (
            <span className="absolute right-1 top-1.5 flex h-[18px] w-[18px] items-center justify-center rounded-full bg-[#ff4a68] text-xs text-white">2</span>
        )}
    </button>
);

const RightSidebar = () => (
    <aside className="flex w-[49px] shrink-0 flex-col bg-white">
        <div className="flex flex-col border-b border-[#e0e3eb] pb-2.5">
            <SideButton icon="news" label="Danh sách theo dõi" />
            <SideButton icon="alarm" label="Cảnh báo" />
            <SideButton icon="dataWindow" label="Cửa sổ dữ liệu" />
            <SideButton icon="fire" label="Danh sách nóng" />
            <SideButton icon="calendar" label="Lịch kinh tế" />
            <SideButton icon="bulb" label="Ý tưởng của tôi" />
        </div>
        <div className="flex flex-col border-b border-[#e0e3eb] py-2">
            <SideButton icon="chats" label="Trò chuyện công khai" />
            <SideButton icon="chat" label="Trò chuyện riêng" />
            <SideButton icon="idea" label="Dòng ý tưởng" />
            <SideButton icon="bell" label="Thông báo" />
        </div>
        <div className="flex flex-col pt-2">
            <SideButton icon="zigzag" label="Bảng lệnh" />
            <SideButton icon="dots" label="DOM" />
        </div>
        <div className="mt-auto flex flex-col">
            <SideButton label="Cây đối tượng"><BetaLayers /></SideButton>
            <SideButton icon="help" label="Trợ giúp" />
        </div>
    </aside>
);

const App = () => {
    const [menuOpen, setMenuOpen] = useState(true);

    return (
        <div className="relative flex h-screen overflow-hidden bg-[#e0e3eb] font-['Liberation_Sans',Arial,sans-serif] text-[15px] leading-5 text-[#2a2e39]">
            <LeftToolbar menuOpen={menuOpen} onToggle={() => setMenuOpen(!menuOpen)} />
            <main className="ml-1 mr-[5px] flex min-w-0 flex-1 flex-col">
                <Header />
                <div className="relative min-h-0 flex-1">
                    <Chart />
                    <AdBanner />
                    <DrawingToolbar />
                </div>
                <RangeBar />
                <BottomTabs />
            </main>
            <RightSidebar />
            {menuOpen && <LineToolMenu />}
        </div>
    );
};

export default App;
